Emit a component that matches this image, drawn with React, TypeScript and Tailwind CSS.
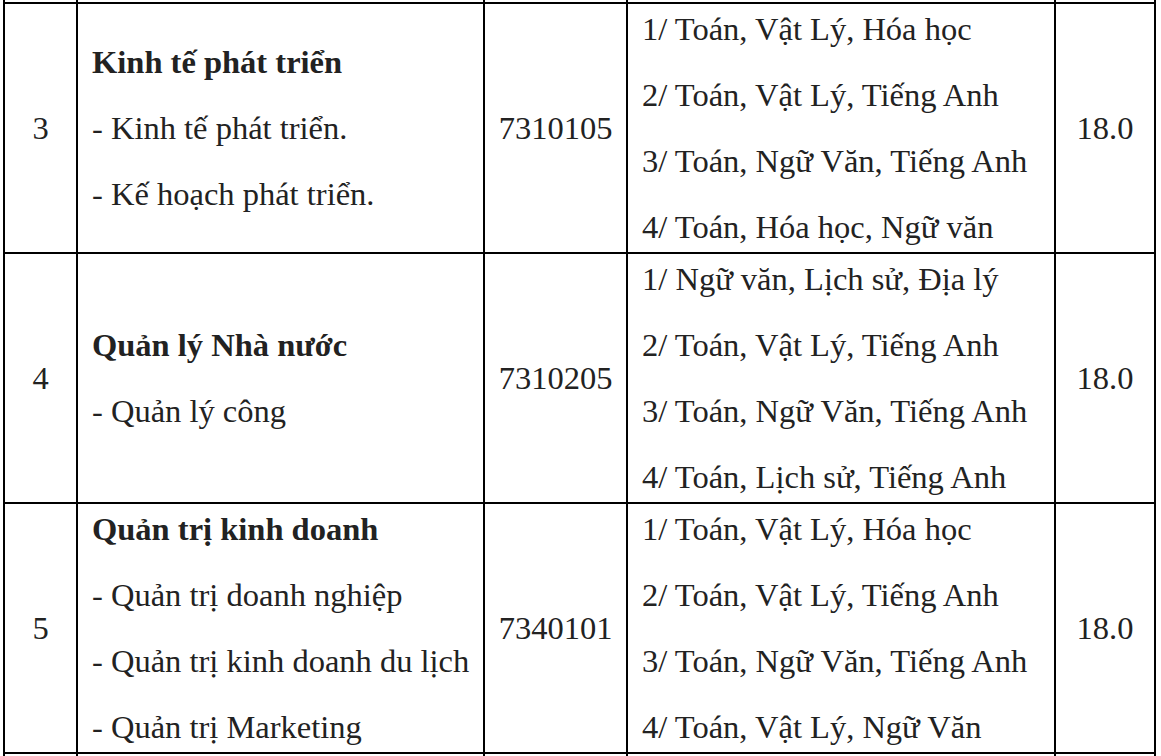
const rows = [
  {
    stt: '3',
    title: 'Kinh tế phát triển',
    items: ['- Kinh tế phát triển.', '- Kế hoạch phát triển.'],
    code: '7310105',
    groups: [
      '1/ Toán, Vật Lý, Hóa học',
      '2/ Toán, Vật Lý, Tiếng Anh',
      '3/ Toán, Ngữ Văn, Tiếng Anh',
      '4/ Toán, Hóa học, Ngữ văn',
    ],
    score: '18.0',
  },
  {
    stt: '4',
    title: 'Quản lý Nhà nước',
    items: ['- Quản lý công'],
    code: '7310205',
    groups: [
      '1/ Ngữ văn, Lịch sử, Địa lý',
      '2/ Toán, Vật Lý, Tiếng Anh',
      '3/ Toán, Ngữ Văn, Tiếng Anh',
      '4/ Toán, Lịch sử, Tiếng Anh',
    ],
    score: '18.0',
  },
  {
    stt: '5',
    title: 'Quản trị kinh doanh',
    items: [
      '- Quản trị doanh nghiệp',
      '- Quản trị kinh doanh du lịch',
      '- Quản trị Marketing',
    ],
    code: '7340101',
    groups: [
      '1/ Toán, Vật Lý, Hóa học',
      '2/ Toán, Vật Lý, Tiếng Anh',
      '3/ Toán, Ngữ Văn, Tiếng Anh',
      '4/ Toán, Vật Lý, Ngữ Văn',
    ],
    score: '18.0',
  },
];

const cell = 'border-2 border-black align-middle py-[3px]';

export default function App() {
  return (
    <div className="w-[1161px] h-[756px] overflow-hidden bg-white [font-family:'Liberation_Serif',serif] text-[32.5px] leading-[44px] text-[#222]">
      <table className="ml-[3px] w-[1153px] table-fixed border-collapse">
        <colgroup>
          <col className="w-[73px]" />
          <col className="w-[407px]" />
          <col className="w-[143px]" />
          <col className="w-[428px]" />
          <col className="w-[100px]" />
        </colgroup>
        <tbody>
          {/* tail of the row above */}
          <tr>
            {[0, 1, 2, 3, 4].map((i) => (
              <td key={i} className="h-[3px] p-0 border-x-2 border-black" />
            ))}
          </tr>
          {rows.map((r) => (
            <tr key={r.stt}>
              <td className={`${cell} text-center`}>{r.stt}</td>
              <td className={`${cell} pl-[14px] pr-0 whitespace-nowrap`}>
                <div className="flex flex-col gap-[22px]">
                  <p className="font-bold">{r.title}</p>
                  {r.items.map((t) => (
                    <p key={t}>{t}</p>
                  ))}
                </div>
              </td>
              <td className={`${cell} text-center`}>{r.code}</td>
              <td className={`${cell} pl-[14px] pr-0 whitespace-nowrap`}>
                <div className="flex flex-col gap-[22px]">
                  {r.groups.map((g) => (
                    <p key={g}>{g}</p>
                  ))}
                </div>
              </td>
              <td className={`${cell} text-center`}>{r.score}</td>
            </tr>
          ))}
          <tr>
            {[0, 1, 2, 3, 4].map((i) => (
              <td key={i} className="h-[4px] p-0 border-x-2 border-black" />
            ))}
          </tr>
        </tbody>
      </table>
    </div>
  );
}
